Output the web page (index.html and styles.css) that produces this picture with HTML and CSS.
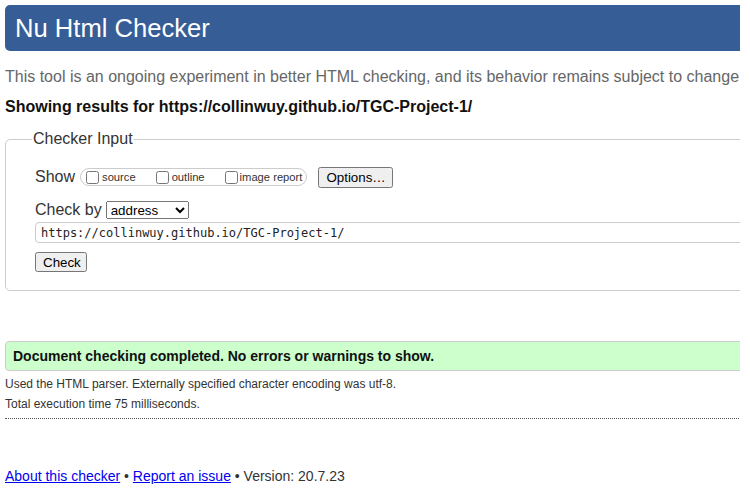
FILE: index.html
```html
<!DOCTYPE html>
<html lang="en">
<head>
<meta charset="utf-8">
<title>Showing results for https://collinwuy.github.io/TGC-Project-1/ - Nu Html Checker</title>
<link rel="stylesheet" href="styles.css">
</head>
<body>
<div class="viewport">
  <div class="sheet">
    <h1 class="title">Nu Html Checker</h1>
    <p class="intro">This tool is an ongoing experiment in better HTML checking, and its behavior remains subject to change</p>
    <p class="showing">Showing results for https://collinwuy.github.io/TGC-Project-1/</p>

    <fieldset class="checker">
      <legend class="checker-legend">Checker Input</legend>
      <div class="row row-show">
        <span class="row-label">Show</span>
        <span class="toggles">
          <label class="toggle"><input type="checkbox" class="cb"><span>source</span></label>
          <label class="toggle"><input type="checkbox" class="cb"><span>outline</span></label>
          <label class="toggle"><input type="checkbox" class="cb"><span>image report</span></label>
        </span>
        <button type="button" class="btn btn-options">Options…</button>
      </div>
      <div class="row row-by">
        <span class="row-label">Check by</span>
        <select class="select">
          <option>address</option>
        </select>
      </div>
      <div class="row row-url">
        <input type="url" class="url" value="https://collinwuy.github.io/TGC-Project-1/">
      </div>
      <div class="row row-submit">
        <button type="button" class="btn btn-check">Check</button>
      </div>
    </fieldset>

    <p class="success">Document checking completed. No errors or warnings to show.</p>
    <div class="meta">
      <p>Used the HTML parser. Externally specified character encoding was utf-8.</p>
      <p>Total execution time 75 milliseconds.</p>
    </div>
    <hr class="sep">
    <p class="footer"><a href="#">About this checker</a> • <a href="#">Report an issue</a> • Version: 20.7.23</p>
  </div>
</div>
</body>
</html>
```

FILE: styles.css
```css
html, body {
  margin: 0;
  padding: 0;
  background: #fff;
}

body {
  font-family: "Liberation Sans", Arial, sans-serif;
  color: #222;
}

.viewport {
  width: 735px;
  padding: 5px 0 0 5px;
  overflow: hidden;
  height: 485px;
}

.sheet {
  width: 790px;
}

.title {
  margin: 0;
  height: 46px;
  display: flex;
  align-items: center;
  padding: 0 10px;
  background: #365d95;
  color: #fff;
  font-weight: normal;
  font-size: 25.6px;
  border-radius: 5px;
}

.intro {
  margin: 16px 0 0;
  font-size: 16px;
  line-height: 20px;
  color: #666;
  white-space: nowrap;
}

.showing {
  margin: 10px 0 0;
  font-size: 16px;
  line-height: 20px;
  font-weight: bold;
  color: #111;
}

.checker {
  margin: 13px 0 0;
  padding: 0 0 18px 29px;
  border: 1px solid #ccc;
  border-radius: 5px;
}

.checker-legend {
  padding: 0 1px;
  margin-left: -3px;
  font-size: 16px;
  line-height: 18px;
  color: #333;
}

.row {
  display: flex;
  align-items: center;
}

.row-label {
  font-size: 16px;
  color: #333;
}

.row-show {
  margin-top: 18px;
  height: 22px;
}

.toggles {
  display: flex;
  align-items: center;
  gap: 16px;
  margin-left: 5px;
  height: 16px;
  padding: 0 4px 0 1px;
  border: 1px solid #ccc;
  border-radius: 9px;
}

.toggle {
  display: flex;
  align-items: center;
  font-size: 11.2px;
  color: #333;
}

.cb {
  width: 13px;
  height: 13px;
  margin: 0 3px 0 4px;
}

.toggle:first-child .cb {
  margin-left: 4px;
}

.toggle:last-child .cb {
  margin-right: 2px;
}

.btn {
  font-family: "Liberation Sans", Arial, sans-serif;
  font-size: 13.33px;
  color: #000;
  padding: 1px 6px;
  margin: 0;
}

.btn-options {
  margin-left: 11px;
  height: 21px;
  width: 75px;
}

.row-by {
  margin-top: 12px;
  height: 20px;
}

.select {
  margin-left: 4px;
  width: 83px;
  height: 18px;
  font-family: "Liberation Sans", Arial, sans-serif;
  font-size: 13.33px;
  color: #000;
}

.row-url {
  margin-top: 2px;
}

.url {
  width: 760px;
  height: 21px;
  box-sizing: border-box;
  padding: 0 5px;
  border: 1px solid #ccc;
  border-radius: 4px;
  font-family: "DejaVu Sans Mono", "Liberation Mono", monospace;
  font-size: 12px;
  color: #222;
}

.row-submit {
  margin-top: 9px;
}

.btn-check {
  height: 20px;
  width: 52px;
}

.success {
  margin: 50px 0 0;
  height: 28px;
  display: flex;
  align-items: center;
  padding: 0 7px;
  background: #ccffcc;
  border: 1px solid #ccc;
  border-radius: 4px;
  font-size: 14px;
  font-weight: bold;
  color: #111;
}

.meta {
  margin-top: 3px;
}

.meta p {
  margin: 0;
  font-size: 12px;
  line-height: 20px;
  color: #333;
}

.sep {
  margin: 4px 0 0;
  border: 0;
  border-top: 1px dotted #555;
  height: 0;
}

.footer {
  margin: 48px 0 0;
  font-size: 14px;
  line-height: 18px;
  color: #333;
}

.footer a {
  color: #0000ee;
}
```
